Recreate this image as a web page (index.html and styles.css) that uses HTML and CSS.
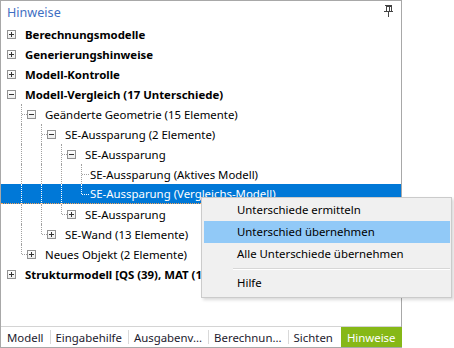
FILE: index.html
```html
<!DOCTYPE html>
<html lang="de">
<head>
    <meta charset="UTF-8">
    <title>Hinweise</title>
    <link rel="stylesheet" href="styles.css">
</head>
<body>
    <div class="panel">
        <div class="head">
            <span class="title">Hinweise</span>
            <svg class="pin" width="9" height="12" viewBox="0 0 9 12">
                <rect x="1" y="0" width="7" height="1" fill="#444"/>
                <rect x="2" y="1" width="5" height="5" fill="none" stroke="#444" stroke-width="1" transform="translate(0.5 0.5)" />
                <rect x="5" y="1" width="1" height="5" fill="#444"/>
                <rect x="0" y="6" width="9" height="1" fill="#444"/>
                <rect x="4" y="7" width="1" height="5" fill="#444"/>
            </svg>
        </div>

        <ul class="tree">
            <li class="row bold"><span class="n"><i class="box plus"></i></span><span class="label">Berechnungsmodelle</span></li>
            <li class="row bold"><span class="n"><i class="box plus"></i></span><span class="label">Generierungshinweise</span></li>
            <li class="row bold"><span class="n"><i class="box plus"></i></span><span class="label">Modell-Kontrolle</span></li>
            <li class="row bold"><span class="n"><i class="box minus"></i></span><span class="label">Modell-Vergleich (17 Unterschiede)</span></li>
            <li class="row"><span class="g"></span><span class="n t"><i class="box minus"></i></span><span class="label">Geänderte Geometrie (15 Elemente)</span></li>
            <li class="row"><span class="g"></span><span class="g v"></span><span class="n t"><i class="box minus"></i></span><span class="label">SE-Aussparung (2 Elemente)</span></li>
            <li class="row"><span class="g"></span><span class="g v"></span><span class="g v"></span><span class="n t"><i class="box minus"></i></span><span class="label">SE-Aussparung</span></li>
            <li class="row"><span class="g"></span><span class="g v"></span><span class="g v"></span><span class="g v"></span><span class="leaf t"></span><span class="label">SE-Aussparung (Aktives Modell)</span></li>
            <li class="row selected"><span class="g"></span><span class="g v"></span><span class="g v"></span><span class="g v"></span><span class="leaf l"></span><span class="label">SE-Aussparung (Vergleichs-Modell)</span></li>
            <li class="row"><span class="g"></span><span class="g v"></span><span class="g v"></span><span class="n l"><i class="box plus"></i></span><span class="label">SE-Aussparung</span></li>
            <li class="row"><span class="g"></span><span class="g v"></span><span class="n l"><i class="box plus"></i></span><span class="label">SE-Wand (13 Elemente)</span></li>
            <li class="row"><span class="g"></span><span class="n l"><i class="box plus"></i></span><span class="label">Neues Objekt (2 Elemente)</span></li>
            <li class="row bold"><span class="n"><i class="box plus"></i></span><span class="label">Strukturmodell [QS (39), MAT (1)]</span></li>
        </ul>

        <div class="tabs">
            <span class="tab">Modell</span>
            <span class="tab">Eingabehilfe</span>
            <span class="tab">Ausgabenv...</span>
            <span class="tab">Berechnun...</span>
            <span class="tab">Sichten</span>
            <span class="tab active">Hinweise</span>
        </div>
    </div>

    <div class="menu">
        <div class="item">Unterschiede ermitteln</div>
        <div class="item hover">Unterschied übernehmen</div>
        <div class="item">Alle Unterschiede übernehmen</div>
        <div class="sep"></div>
        <div class="item">Hilfe</div>
    </div>
</body>
</html>
```

FILE: styles.css
```css
body {
    margin: 0;
    width: 454px;
    height: 348px;
    background-color: #fff;
    font-family: "Noto Sans", "Open Sans", sans-serif;
    font-size: 11.4px;
    color: #000;
    position: relative;
    overflow: hidden;
}

.panel {
    box-sizing: border-box;
    width: 402px;
    height: 348px;
    border: 1px solid #a8a8a8;
    display: flex;
    flex-direction: column;
}

.head {
    height: 23px;
    display: flex;
    align-items: center;
    justify-content: space-between;
    padding: 0 8px 0 6px;
}

.title {
    color: #3f6fc3;
    font-size: 12.6px;
}

.pin {
    display: block;
    margin-top: -4px;
}

.tree {
    list-style: none;
    margin: 0;
    padding: 0;
    flex: 1;
}

.row {
    height: 20px;
    display: flex;
    align-items: center;
    white-space: nowrap;
}

.row.bold {
    font-weight: bold;
}

.row.selected {
    background-color: #0078d7;
    color: #fff;
    border-bottom: 1px dotted #f3a35a;
    height: 19px;
}

/* guide cells for the dotted tree lines */
.g, .n {
    width: 20px;
    height: 100%;
    flex: none;
    position: relative;
}

.leaf {
    width: 9px;
    height: 100%;
    flex: none;
    position: relative;
}

.g.v::before,
.n.t::before,
.n.l::before,
.leaf.t::before,
.leaf.l::before {
    content: "";
    position: absolute;
    left: 0;
    top: 0;
    height: 20px;
    border-left: 1px dotted #a0a0a0;
}

.n.l::before,
.leaf.l::before {
    height: 10px;
}

.n.t::after,
.n.l::after,
.leaf.t::after,
.leaf.l::after {
    content: "";
    position: absolute;
    left: 1px;
    top: 10px;
    width: 5px;
    border-top: 1px dotted #a0a0a0;
}

.leaf.t::after,
.leaf.l::after {
    width: 7px;
}

.selected .g.v::before,
.selected .leaf::before,
.selected .leaf::after {
    border-color: #fff;
}

.box {
    position: absolute;
    left: 6px;
    top: 6px;
    box-sizing: border-box;
    width: 9px;
    height: 9px;
    border: 1px solid #919191;
    background: linear-gradient(#fff, #ececec);
}

.box::before {
    content: "";
    position: absolute;
    left: 1px;
    top: 3px;
    width: 5px;
    height: 1px;
    background-color: #333;
}

.box.plus::after {
    content: "";
    position: absolute;
    left: 3px;
    top: 1px;
    width: 1px;
    height: 5px;
    background-color: #333;
}

.label {
    padding-left: 4px;
}

.leaf + .label {
    padding-left: 0;
}

.tabs {
    height: 20px;
    border-top: 1px solid #d4d4d4;
    display: flex;
    align-items: stretch;
    color: #1c1a2e;
}

.tab {
    display: flex;
    align-items: center;
    padding: 0 6px;
    position: relative;
}

.tab:first-child {
    padding-left: 6px;
}

.tab + .tab::before {
    content: "";
    position: absolute;
    left: 0;
    top: 3px;
    height: 14px;
    border-left: 1px solid #d9d9d9;
}

.tab.active {
    background-color: #86b817;
    color: #fff;
    flex: 1;
    margin-left: 2px;
    padding-left: 6px;
}

.tab.active::before {
    display: none;
}

.menu {
    position: absolute;
    left: 201px;
    top: 197px;
    width: 251px;
    box-sizing: border-box;
    padding: 1px 1px 3px 1px;
    background-color: #f0f0f0;
    border: 1px solid #cbcbcb;
    box-shadow: 2px 2px 3px rgba(0, 0, 0, 0.15);
}

.item {
    height: 22px;
    line-height: 22px;
    padding-left: 33px;
    margin: 0 0 0 1px;
}

.item.hover {
    background-color: #91c9f7;
}

.sep {
    height: 1px;
    margin: 3px 0 2px 30px;
    background-color: #d7d7d7;
    border-bottom: 1px solid #fff;
}
```
